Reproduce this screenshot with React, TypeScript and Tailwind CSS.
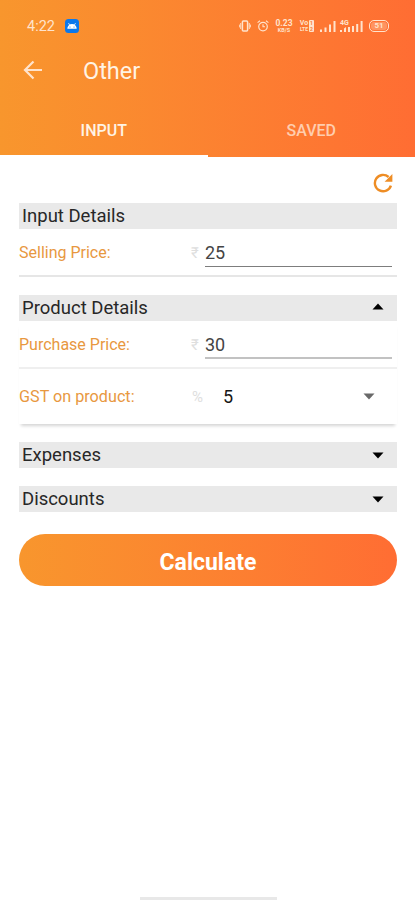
import React, { useState } from "react";

interface SectionHeaderProps {
    title: string;
    open?: boolean;
    onToggle?: () => void;
}

const Caret = ({ up = false, className = "" }: { up?: boolean; className?: string }) => (
    <svg viewBox="0 0 12 7" className={`w-3 h-[7px] ${className}`} fill="currentColor">
        <path d={up ? "M0.5 6.5 6 0.5 11.5 6.5Z" : "M0.5 0.5 6 6.5 11.5 0.5Z"} />
    </svg>
);

const SectionHeader = ({ title, open, onToggle }: SectionHeaderProps) => (
    <button
        type="button"
        onClick={onToggle}
        className="w-full h-[26px] pl-[3px] pr-[13px] bg-[#e9e9e9] flex items-center justify-between text-[18.5px] leading-[26px] text-[#272727]"
    >
        <span>{title}</span>
        {onToggle && <Caret up={open} className={open ? "mb-[3px] text-black" : "text-black"} />}
    </button>
);

interface PriceRowProps {
    label: string;
    value: string;
    onChange: (value: string) => void;
    className: string;
    lineClass: string;
}

const PriceRow = ({ label, value, onChange, className, lineClass }: PriceRowProps) => (
    <div className={`flex items-start pr-[5px] ${className}`}>
        <label className="w-[172px] pt-[11px] text-[16px] leading-[26px] text-[#e8983f]">{label}</label>
        <span className="w-[14px] pt-[11px] text-[15px] leading-[26px] text-[#dedede]">₹</span>
        <input
            type="text"
            inputMode="decimal"
            value={value}
            onChange={(e) => onChange(e.target.value)}
            className={`flex-1 min-w-0 pt-[10px] text-[18px] text-[#444] outline-none ${lineClass}`}
        />
    </div>
);

const StatusBar = () => (
    <div className="h-[52px] pl-[27px] pr-[26px] flex items-center text-[#ffe3cc]">
        <span className="w-[38px] pt-px text-[14.5px] leading-4">4:22</span>
        <svg viewBox="0 0 14 14" className="w-[14px] h-[14px]">
            <rect width="14" height="14" rx="3.5" fill="#0b78ec" />
            <path d="M2.3 9.7a4.7 4.7 0 0 1 9.4 0Z" fill="#fff" />
            <path d="M3.5 4.1 4.8 6.3M10.5 4.1 9.2 6.3" stroke="#fff" strokeWidth="0.8" />
            <circle cx="5" cy="8" r="0.55" fill="#0b78ec" />
            <circle cx="9" cy="8" r="0.55" fill="#0b78ec" />
        </svg>

        <div className="ml-auto flex items-center">
            {/* Vibrate */}
            <svg viewBox="0 0 12 12" className="w-3 h-3 mr-[6px]" fill="none" stroke="currentColor">
                <rect x="3.4" y="1" width="5.2" height="10" rx="1" strokeWidth="1.5" />
                <path d="M1.7 3v6M10.3 3v6M0.4 4.6v2.8M11.6 4.6v2.8" strokeWidth="0.9" />
            </svg>
            {/* Alarm */}
            <svg viewBox="0 0 12 12" className="w-3 h-3 mr-[6px]" fill="none" stroke="currentColor">
                <circle cx="6" cy="6.6" r="4.3" strokeWidth="1.2" />
                <path d="M0.6 2.6 3 0.7M11.4 2.6 9 0.7M6 4.2v2.6h2" strokeWidth="1.1" />
            </svg>
            <div className="w-[18px] mr-[6px] flex flex-col items-center font-bold">
                <span className="text-[8.5px] leading-[8px]">0.23</span>
                <span className="text-[5.5px] leading-[6px]">KB/S</span>
            </div>
            <div className="w-[15px] mr-[6px] flex items-center font-bold">
                <div className="flex flex-col items-center w-[10px]">
                    <span className="text-[7px] leading-[7px]">Vo</span>
                    <span className="text-[5px] leading-[5px]">LTE</span>
                </div>
                <span className="w-[5px] h-3 bg-[#ffe3cc] rounded-[1px] text-[5px] leading-[6px] text-center text-[#fb7b36]">
                    1<br />2
                </span>
            </div>
            <svg viewBox="0 0 16 12" className="w-4 h-3 mr-1" fill="currentColor">
                <path d="M0 9.5h2V12H0zM4.5 7.5h2V12h-2zM9 4.5h2V12H9zM13.5 1h2v11h-2z" />
            </svg>
            <div className="w-[23px] mr-[6px] flex items-end">
                <div className="w-[12px] flex flex-col">
                    <span className="text-[7px] leading-[6px] font-bold">4G</span>
                    <svg viewBox="0 0 12 6" className="w-3 h-[6px]" fill="currentColor">
                        <path d="M0 4h2v2H0zM4 2.5 6 1v5H4zM8 1h2v5H8z" />
                    </svg>
                </div>
                <svg viewBox="0 0 11 12" className="w-[11px] h-3" fill="currentColor">
                    <path d="M0 6h2v6H0zM4.2 4h2v8h-2zM8.6 1h2v11h-2z" />
                </svg>
            </div>
            <div className="w-5 h-3 p-[1px] border border-[#ffe3cc] rounded-[5px]">
                <div className="h-full rounded-[3px] bg-[#ffe3cc]/30 text-[8px] leading-[8px] text-center font-bold">51</div>
            </div>
        </div>
    </div>
);

const App = () => {
    const [tab, setTab] = useState("INPUT");
    const [sellingPrice, setSellingPrice] = useState("25");
    const [purchasePrice, setPurchasePrice] = useState("30");
    const [productOpen, setProductOpen] = useState(true);
    const [expensesOpen, setExpensesOpen] = useState(false);
    const [discountsOpen, setDiscountsOpen] = useState(false);

    const handleReset = () => {
        setSellingPrice("");
        setPurchasePrice("");
    };

    return (
        <div className="w-full h-screen min-h-[900px] overflow-hidden bg-white flex flex-col font-[Roboto,sans-serif]">
            <header className="h-[157px] shrink-0 flex flex-col bg-linear-to-r from-[#f8962d] to-[#ff6d33]">
                <StatusBar />
                <div className="h-[52px] pl-[23px] pb-[16px] flex items-center">
                    <svg viewBox="0 0 20 20" className="w-5 h-5" fill="none" stroke="#ffe3cc" strokeWidth="2.2">
                        <path d="M19 10H2M10.5 1.5 2 10 10.5 18.5" />
                    </svg>
                    <h1 className="ml-[40px] pt-px text-[23.5px] leading-8 text-[#fff3e4]">Other</h1>
                </div>
                <div className="flex-1 flex">
                    {["INPUT", "SAVED"].map((name) => (
                        <button
                            key={name}
                            type="button"
                            onClick={() => setTab(name)}
                            className={`flex-1 pt-[2px] border-b-2 text-[16px] font-medium ${
                                tab === name ? "border-white text-[#fff3e4]" : "border-transparent text-[#ffcdae]"
                            }`}
                        >
                            {name}
                        </button>
                    ))}
                </div>
            </header>

            <main className="flex-1 pl-[19px] pr-[18px]">
                <div className="h-[46px] pt-[13px] pr-1 flex justify-end items-start">
                    <button type="button" onClick={handleReset} aria-label="Reset">
                        <svg viewBox="0 0 20 20" className="w-5 h-[26px]" fill="none">
                            <path d="M17.9 12.6A8.2 8.2 0 1 1 15.6 4" stroke="#ee8d25" strokeWidth="2.4" />
                            <path d="M19.4 1v7.8h-7.8Z" fill="#ee8d25" />
                        </svg>
                    </button>
                </div>

                {/* Input details */}
                <SectionHeader title="Input Details" />
                <PriceRow
                    label="Selling Price:"
                    value={sellingPrice}
                    onChange={setSellingPrice}
                    className="h-[48px] border-b-2 border-[#e6e6e6]"
                    lineClass="h-[38px] pb-px border-b border-[#7d7d7d]"
                />

                {/* Product details */}
                <div className="mt-[18px]">
                    <SectionHeader title="Product Details" open={productOpen} onToggle={() => setProductOpen(!productOpen)} />
                    {productOpen && (
                        <div className="shadow-[0_4px_3px_-2px_#d6d6d6]">
                            <PriceRow
                                label="Purchase Price:"
                                value={purchasePrice}
                                onChange={setPurchasePrice}
                                className="h-[48px] border-b-2 border-[#efefef]"
                                lineClass="h-[38px] border-b-2 border-[#c2c2c2]"
                            />
                            <div className="h-[55px] pr-[22px] flex items-center">
                                <span className="w-[173px] pt-[2px] text-[16.2px] text-[#e8983f]">GST on product:</span>
                                <span className="w-[31px] pt-[2px] text-[15px] text-[#dedede]">%</span>
                                <span className="flex-1 text-[18px] text-[#161616]">5</span>
                                <Caret className="text-[#696969]" />
                            </div>
                        </div>
                    )}
                </div>

                <div className="mt-[18px] flex flex-col gap-[18px]">
                    <SectionHeader title="Expenses" open={expensesOpen} onToggle={() => setExpensesOpen(!expensesOpen)} />
                    <SectionHeader title="Discounts" open={discountsOpen} onToggle={() => setDiscountsOpen(!discountsOpen)} />
                </div>

                <button
                    type="button"
                    className="mt-[22px] w-full h-[52px] pt-[6px] rounded-full bg-linear-to-r from-[#f8962d] to-[#ff6d33] text-[23px] font-bold text-white"
                >
                    Calculate
                </button>
            </main>

            {/* Gesture bar */}
            <div className="w-[137px] h-[3px] ml-[140px] shrink-0 bg-[#e8e8e8]" />
        </div>
    );
};

export default App;
